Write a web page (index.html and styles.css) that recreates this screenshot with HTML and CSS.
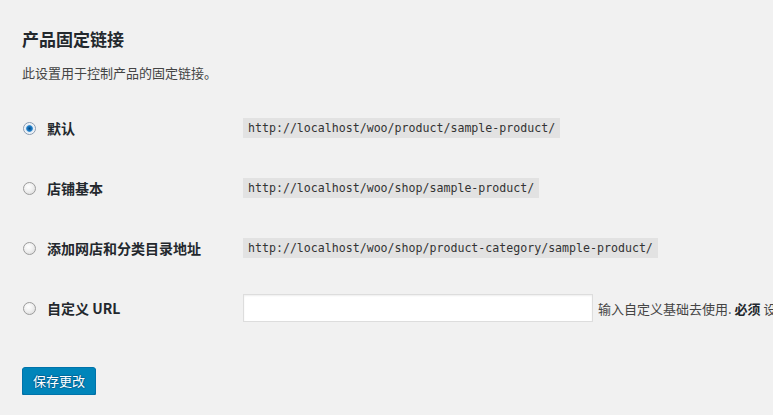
FILE: index.html
```html
<!DOCTYPE html>
<html lang="zh-CN">
<head>
<meta charset="utf-8">
<title>产品固定链接</title>
<link rel="stylesheet" href="styles.css">
</head>
<body>
<div class="wrap">
  <h2 class="title">产品固定链接</h2>
  <p class="desc">此设置用于控制产品的固定链接。</p>
  <div class="table">
    <div class="row">
      <label class="th"><span class="radio checked"></span><span class="lbl">默认</span></label>
      <div class="td"><code class="code">http://localhost/woo/product/sample-product/</code></div>
    </div>
    <div class="row">
      <label class="th"><span class="radio"></span><span class="lbl">店铺基本</span></label>
      <div class="td"><code class="code">http://localhost/woo/shop/sample-product/</code></div>
    </div>
    <div class="row">
      <label class="th"><span class="radio"></span><span class="lbl">添加网店和分类目录地址</span></label>
      <div class="td"><code class="code">http://localhost/woo/shop/product-category/sample-product/</code></div>
    </div>
    <div class="row">
      <label class="th"><span class="radio"></span><span class="lbl">自定义 URL</span></label>
      <div class="td"><input class="input" type="text"><span class="hint">输入自定义基础去使用. <strong>必须</strong> 设</span></div>
    </div>
  </div>
  <div class="submit"><button class="button" type="button">保存更改</button></div>
</div>
</body>
</html>
```

FILE: styles.css
```css
html, body {
  margin: 0;
  padding: 0;
  background: #f1f1f1;
  overflow: hidden;
}
body {
  font-family: "Noto Sans CJK SC", "Noto Sans", sans-serif;
  color: #444;
  font-size: 13px;
}
.wrap {
  padding: 27px 0 0 22px;
}
.title {
  margin: 0;
  font-size: 17px;
  line-height: 24px;
  font-weight: 700;
  color: #23282d;
}
.desc {
  margin: 12px 0 0;
  line-height: 20px;
  font-size: 13px;
  color: #444;
}
.table {
  margin-top: 15px;
}
.row {
  display: flex;
  align-items: center;
  height: 60px;
}
.th {
  width: 221px;
  flex: none;
  display: flex;
  align-items: center;
}
.radio {
  width: 11px;
  height: 11px;
  border-radius: 50%;
  border: 1px solid #9c9c9c;
  background: radial-gradient(circle at 40% 35%, #ffffff 0%, #f0f0f0 45%, #d6d6d6 100%);
  margin-left: 1px;
  margin-right: 11px;
  flex: none;
}
.radio.checked {
  border-color: #8a9bb0;
  background: radial-gradient(circle at 50% 50%, #06477d 0%, #1a78c2 30%, #3b8fd0 38%, #dfe9f3 48%, #f7f9fb 70%, #dde2e8 100%);
}
.lbl {
  font-size: 14px;
  font-weight: 700;
  color: #23282d;
  line-height: 20px;
  white-space: nowrap;
}
.td {
  display: flex;
  align-items: center;
  white-space: nowrap;
}
.code {
  display: inline-block;
  font-family: "DejaVu Sans Mono", "Liberation Mono", monospace;
  font-size: 11.6px;
  line-height: 20px;
  height: 20px;
  padding: 0 5px;
  background: #e2e2e2;
  color: #333;
}
.input {
  box-sizing: border-box;
  width: 350px;
  height: 28px;
  margin: 0;
  border: 1px solid #ddd;
  background: #fff;
  box-shadow: inset 0 1px 2px rgba(0,0,0,.07);
  outline: none;
}
.hint {
  margin-left: 5px;
  font-size: 13px;
  color: #444;
}
.hint strong {
  color: #23282d;
}
.submit {
  margin-top: 29px;
}
.button {
  box-sizing: border-box;
  height: 28px;
  width: 74px;
  padding: 0;
  border: 1px solid #0073aa;
  border-radius: 3px;
  background: #0085ba;
  box-shadow: 0 1px 0 #006799;
  color: #fff;
  font-family: "Noto Sans CJK SC", "Noto Sans", sans-serif;
  font-size: 13px;
  line-height: 26px;
  text-shadow: 0 -1px 1px #006799, 1px 0 1px #006799, 0 1px 1px #006799, -1px 0 1px #006799;
}
```
